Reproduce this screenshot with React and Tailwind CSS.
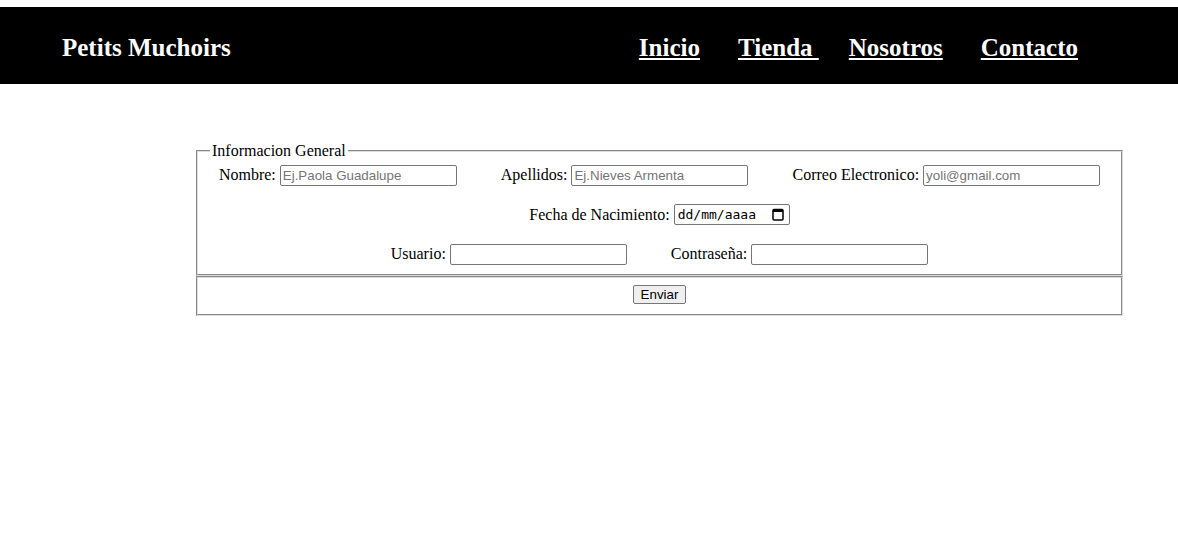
import React from 'react';

const inputCls =
  "w-[177px] h-[21px] border border-[#767676] rounded-[2px] bg-white px-[2px] text-[13.33px] font-['Liberation_Sans',Arial,sans-serif] text-black placeholder:text-[#757575] outline-none";

const Field = ({ label, placeholder, type = 'text' }) => (
  <span className="inline-flex items-center">
    <span>{label}:</span>
    <input type={type} placeholder={placeholder} className={`${inputCls} ml-[4px]`} />
  </span>
);

const CalendarIcon = () => (
  <svg width="12" height="13" viewBox="0 0 12 13" fill="none">
    <rect x="1" y="1.5" width="10" height="10.5" rx="1" stroke="#000" strokeWidth="1.5" />
    <rect x="1" y="1.5" width="10" height="2.5" fill="#000" />
  </svg>
);

export default function App() {
  return (
    <div className="min-h-screen bg-white pt-[7px] font-['Liberation_Serif','Times_New_Roman',serif] text-black">
      {/* Header */}
      <header className="bg-black h-[77px] flex items-center justify-between pl-[62px] pr-[100px] pt-[5px]">
        <h1 className="text-white font-bold text-[25px]">Petits Muchoirs</h1>
        <nav className="flex items-center gap-[38px] font-bold text-[25px]">
          <a href="#" className="text-white underline">Inicio</a>
          <a href="#" className="text-white underline">Tienda&nbsp;</a>
          <a href="#" className="text-white underline ml-[-8px]">Nosotros</a>
          <a href="#" className="text-white underline">Contacto</a>
        </nav>
      </header>

      {/* Form */}
      <form className="ml-[196px] w-[927px] mt-[55px] text-[16px]">
        <fieldset className="border-2 [border-style:groove] border-[#dcdcdc] px-[12px] pt-0 pb-[8px]">
          <legend className="px-[2px]">Informacion General</legend>
          <div className="flex flex-col gap-[15.5px]">
            <div className="flex justify-center gap-[44px]">
              <Field label="Nombre" placeholder="Ej.Paola Guadalupe" />
              <Field label="Apellidos" placeholder="Ej.Nieves Armenta" />
              <Field label="Correo Electronico" placeholder="yoli@gmail.com" />
            </div>
            <div className="flex justify-center">
              <span className="inline-flex items-center">
                <span>Fecha de Nacimiento:</span>
                <span className="ml-[4px] w-[116px] h-[21px] border border-[#767676] rounded-[2px] flex items-center justify-between pl-[3px] pr-[5px] text-[13px] font-['DejaVu_Sans_Mono',monospace]">
                  <span>dd/mm/aaaa</span>
                  <CalendarIcon />
                </span>
              </span>
            </div>
            <div className="flex justify-center gap-[44px]">
              <Field label="Usuario" />
              <Field label="Contraseña" type="password" />
            </div>
          </div>
        </fieldset>
        <fieldset className="border-2 [border-style:groove] border-[#dcdcdc] flex justify-center pt-[7px] pb-[10px]">
          <button
            type="button"
            className="h-[19px] px-[7px] bg-[#efefef] border border-[#767676] rounded-[2px] text-[13.33px] leading-none font-['Liberation_Sans',Arial,sans-serif]"
          >
            Enviar
          </button>
        </fieldset>
      </form>
    </div>
  );
}
